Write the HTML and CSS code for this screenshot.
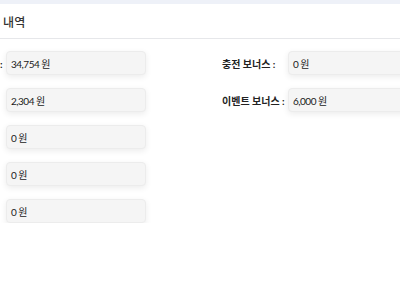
FILE: index.html
```html
<!DOCTYPE html>
<html lang="ko">
<head>
    <meta charset="UTF-8">
    <meta name="viewport" content="width=device-width, initial-scale=1.0">
    <title>캐시 내역</title>
    <link rel="stylesheet" href="styles.css">
</head>
<body>
    <div class="topbar"></div>
    <div class="panel-header">
        <span class="panel-title">캐시 내역</span>
    </div>
    <div class="panel-body">
        <div class="field-col">
            <div class="field-row">
                <span class="field-label">누적 충전금액 :</span>
                <div class="field-box">34,754 원</div>
            </div>
            <div class="field-row">
                <span class="field-label">캐시 잔액 :</span>
                <div class="field-box">2,304 원</div>
            </div>
            <div class="field-row">
                <span class="field-label">사용 캐시 :</span>
                <div class="field-box">0 원</div>
            </div>
            <div class="field-row">
                <span class="field-label">환불 캐시 :</span>
                <div class="field-box">0 원</div>
            </div>
            <div class="field-row">
                <span class="field-label">소멸 캐시 :</span>
                <div class="field-box">0 원</div>
            </div>
        </div>
        <div class="field-col">
            <div class="field-row">
                <span class="field-label">충전 보너스 :</span>
                <div class="field-box">0 원</div>
            </div>
            <div class="field-row">
                <span class="field-label">이벤트 보너스 :</span>
                <div class="field-box">6,000 원</div>
            </div>
        </div>
    </div>
</body>
</html>
```

FILE: styles.css
```css
body {
    margin: 0;
    padding: 0;
    font-family: 'Lato', 'Noto Sans CJK KR', sans-serif;
    color: #222;
    background-color: #fff;
    overflow: hidden;
}
.topbar {
    height: 4px;
    background-color: #eef1f8;
}
.panel-header {
    height: 34px;
    display: flex;
    align-items: center;
    border-bottom: 1px solid #e6e7ea;
    overflow: hidden;
}
.panel-title {
    margin-left: -22px;
    font-size: 12px;
    font-weight: 500;
    color: #333;
    white-space: nowrap;
}
.panel-body {
    display: grid;
    grid-template-columns: 206px 206px;
    column-gap: 76px;
    margin-left: -60px;
    padding-top: 12px;
}
.field-col {
    display: flex;
    flex-direction: column;
    gap: 13px;
}
.field-row {
    display: flex;
    align-items: center;
}
.field-label {
    width: 66px;
    flex-shrink: 0;
    font-size: 10px;
    font-weight: 700;
    color: #222;
    white-space: nowrap;
}
.field-box {
    width: 140px;
    height: 24px;
    box-sizing: border-box;
    display: flex;
    align-items: center;
    padding-left: 4px;
    font-size: 10px;
    letter-spacing: -0.5px;
    color: #1a1a1a;
    background-color: #f5f5f5;
    border: 1px solid #ececec;
    border-radius: 4px;
    box-shadow: 0 2px 6px rgba(0, 0, 0, 0.08);
}
```
